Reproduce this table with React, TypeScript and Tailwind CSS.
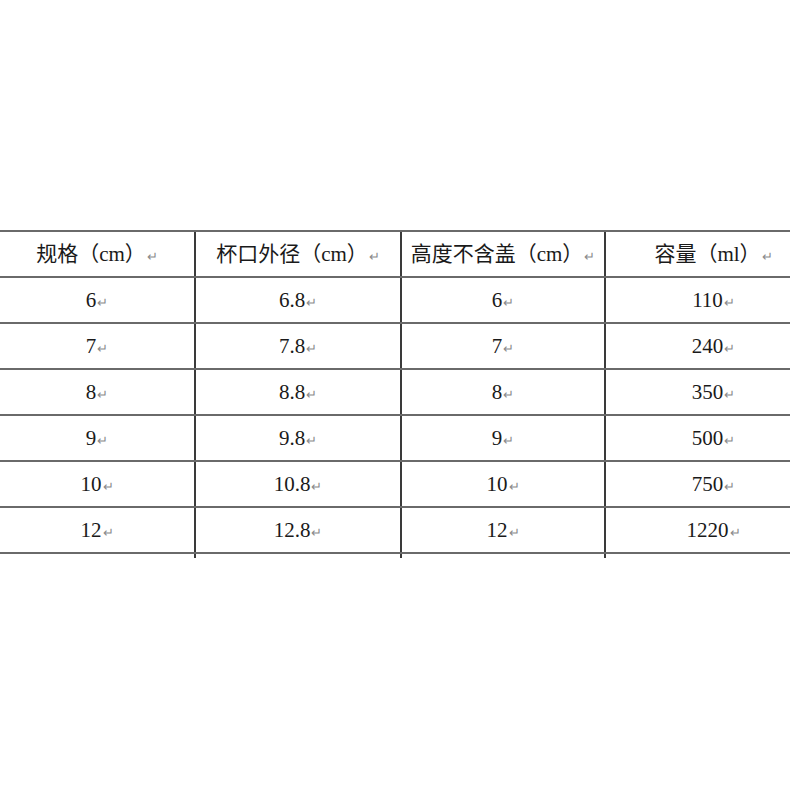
import React from "react";

const headers = ["规格（cm）", "杯口外径（cm）", "高度不含盖（cm）", "容量（ml）"];
const rows = [
  ["6", "6.8", "6", "110"],
  ["7", "7.8", "7", "240"],
  ["8", "8.8", "8", "350"],
  ["9", "9.8", "9", "500"],
  ["10", "10.8", "10", "750"],
  ["12", "12.8", "12", "1220"],
];
const widths = ["w-[196px]", "w-[206px]", "w-[204px]", "w-[215px]"];

function Mark() {
  return <span className="text-[13px] text-[#8a8a8a] ml-[1px] relative top-[2px]">↵</span>;
}

function Row({ cells }: { cells: string[] }) {
  return (
    <div className="flex h-[46px] border-b-2 border-[#6a6a6a]">
      {cells.map((c, i) => (
        <div
          key={i}
          className={`${widths[i]} shrink-0 flex items-center justify-center pt-[2px] ${i < 3 ? "border-r-2 border-[#3a3a3a]" : ""}`}
        >
          <span className="whitespace-nowrap">{c}</span>
          <Mark />
        </div>
      ))}
    </div>
  );
}

export default function App() {
  return (
    <div
      className="w-[790px] h-[790px] overflow-hidden bg-white text-[#1a1a1a] text-[21px]"
      style={{ fontFamily: '"Liberation Serif", "Noto Sans CJK SC", serif' }}
    >
      <div className="mt-[230px] w-[821px] border-t-2 border-[#6a6a6a]">
        <Row cells={headers} />
        {rows.map((r, i) => (
          <Row key={i} cells={r} />
        ))}
      </div>
      <div className="flex h-[4px] w-[821px]">
        {widths.map((w, i) => (
          <div key={i} className={`${w} shrink-0 ${i < 3 ? "border-r-2 border-[#3a3a3a]" : ""}`} />
        ))}
      </div>
    </div>
  );
}
